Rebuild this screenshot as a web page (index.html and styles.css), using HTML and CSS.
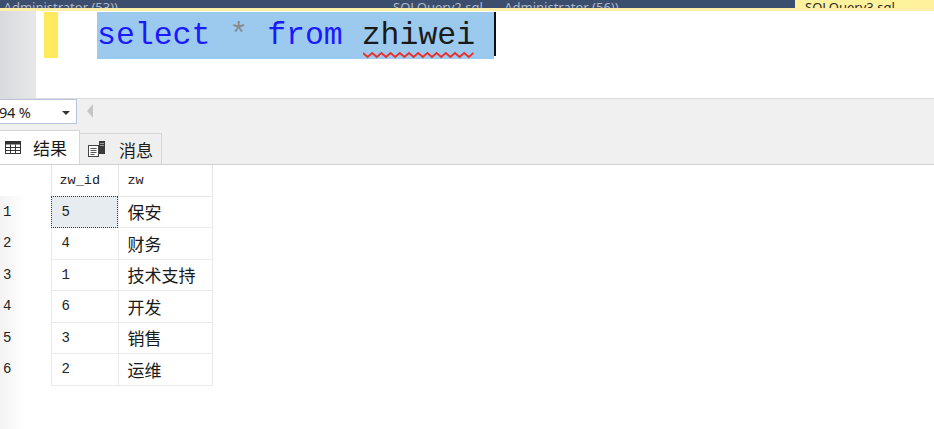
FILE: index.html
```html
<!DOCTYPE html>
<html>
<head>
<meta charset="utf-8">
<link rel="stylesheet" href="styles.css">
</head>
<body>
<div class="tabbar">
  <div class="doctab t1"><span>SQLQuery1.sql - ...Administrator (53))</span></div>
  <div class="doctab t2"><span>SQLQuery2.sql - ...Administrator (56))</span></div>
  <div class="doctab active"><span>SQLQuery3.sql</span></div>
</div>
<div class="tabline"></div>
<div class="editor">
  <div class="gutter"></div>
  <div class="changebar"></div>
  <div class="code">
    <span class="sel"><span class="kw">select</span> <span class="op">*</span> <span class="kw">from</span> <span class="err">zhiwei<svg class="squig" width="112" height="8" viewBox="0 0 112 8"><polyline points="0,2 4.6,6 9.2,2 13.8,6 18.4,2 23,6 27.6,2 32.2,6 36.8,2 41.4,6 46,2 50.6,6 55.2,2 59.8,6 64.4,2 69,6 73.6,2 78.2,6 82.8,2 87.4,6 92,2 96.6,6 101.2,2 105.8,6 110.4,2" fill="none" stroke="#e8302a" stroke-width="1.8"/></svg></span> </span><span class="caret"></span>
  </div>
</div>
<div class="toolbar">
  <div class="zoom"><span>94 %</span><span class="arrow"></span></div>
  <div class="scrollleft"></div>
</div>
<div class="restabs">
  <div class="rtab on">
    <svg width="16" height="13" viewBox="0 0 16 13"><rect x="0.5" y="0.5" width="15" height="12" fill="#fff" stroke="#333"/><rect x="0.5" y="0.5" width="15" height="3" fill="#333"/><path d="M5.5 3.5V12.5M10.5 3.5V12.5M0.5 6.5H15.5M0.5 9.5H15.5" stroke="#333" fill="none"/></svg>
    <span>结果</span>
  </div>
  <div class="rtab off">
    <svg width="18" height="16" viewBox="0 0 18 16"><rect x="0.5" y="4.5" width="10" height="11" fill="#fff" stroke="#444"/><path d="M2.5 7.5H8.5M2.5 9.5H8.5M2.5 11.5H8.5M2.5 13.5H6.5" stroke="#555"/><rect x="11" y="0" width="6" height="13" fill="#3a3a3a"/><rect x="12" y="2" width="4" height="1" fill="#9a9a9a"/><rect x="12" y="4" width="4" height="1" fill="#9a9a9a"/></svg>
    <span>消息</span>
  </div>
</div>
<div class="results">
  <table class="grid">
    <thead>
      <tr><th class="rn"></th><th class="c1">zw_id</th><th class="c2">zw</th></tr>
    </thead>
    <tbody>
      <tr><td class="rn">1</td><td class="c1 cur">5</td><td class="c2">保安</td></tr>
      <tr><td class="rn">2</td><td class="c1">4</td><td class="c2">财务</td></tr>
      <tr><td class="rn">3</td><td class="c1">1</td><td class="c2">技术支持</td></tr>
      <tr><td class="rn">4</td><td class="c1">6</td><td class="c2">开发</td></tr>
      <tr><td class="rn">5</td><td class="c1">3</td><td class="c2">销售</td></tr>
      <tr><td class="rn">6</td><td class="c1">2</td><td class="c2">运维</td></tr>
    </tbody>
  </table>
</div>
</body>
</html>
```
FILE: styles.css
```css
* { box-sizing: border-box; }
html, body { margin: 0; padding: 0; }
body {
  width: 934px;
  height: 429px;
  overflow: hidden;
  background: #fff;
  font-family: "Noto Sans", "Noto Sans CJK SC", sans-serif;
}
.tabbar {
  height: 8px;
  background: #3b4e6d;
  display: flex;
  overflow: hidden;
}
.doctab {
  height: 8px;
  display: flex;
  align-items: flex-end;
  overflow: hidden;
  font-size: 13px;
  line-height: 14px;
  white-space: nowrap;
}
.doctab span { position: relative; top: 6px; }
.t1 { width: 380px; color: #aeb8cb; justify-content: flex-end; padding-right: 262px; }
.t2 { width: 415px; color: #aeb8cb; padding-left: 13px; }
.active { flex: 1; background: #fff29d; color: #2a2a2a; padding-left: 10px; }
.tabline { height: 3px; background: #fdf0a6; }

.editor {
  height: 87px;
  display: flex;
  background: #fff;
}
.gutter {
  width: 36px;
  background: linear-gradient(to right, #d9dadd, #e8e8eb);
}
.changebar {
  width: 14px;
  height: 46px;
  margin-left: 8px;
  margin-top: 1px;
  background: #ffe95c;
}
.code {
  margin-left: 39px;
  margin-top: 1px;
  display: flex;
  align-items: flex-start;
  font-family: "Liberation Mono", monospace;
  font-size: 31.5px;
  line-height: 47px;
  white-space: pre;
}
.sel { background: #9ccaef; height: 47px; }
.kw { color: #1a1aff; }
.op { color: #8a8a8a; }
.err { color: #1a1a1a; position: relative; }
.squig { position: absolute; left: 1px; top: 33px; }
.caret { width: 2px; height: 44px; background: #111; }

.toolbar {
  height: 32px;
  background: #f0f0f0;
  border-top: 1px solid #dcdcdc;
  display: flex;
  align-items: flex-start;
}
.zoom {
  width: 77px;
  height: 25px;
  background: #fff;
  border: 1px solid #b7c5dc;
  border-left: none;
  display: flex;
  align-items: center;
  justify-content: space-between;
  padding-right: 6px;
  font-size: 14.5px;
  color: #1e1e1e;
}
.zoom span:first-child { margin-left: -1px; letter-spacing: -0.2px; }
.arrow {
  width: 0; height: 0;
  border-left: 4px solid transparent;
  border-right: 4px solid transparent;
  border-top: 4px solid #333;
  margin-top: 2px;
}
.scrollleft {
  width: 0; height: 0;
  margin-left: 10px;
  margin-top: 5px;
  border-top: 7px solid transparent;
  border-bottom: 7px solid transparent;
  border-right: 6px solid #c6c6c6;
}

.restabs {
  height: 35px;
  background: #f0f0f0;
  display: flex;
  align-items: flex-end;
  border-bottom: 1px solid #d0d0d0;
}
.rtab {
  display: flex;
  align-items: center;
  font-family: "Noto Sans CJK SC", sans-serif;
  font-size: 17px;
  color: #1a1a1a;
  border: 1px solid #d6d6d6;
  border-bottom: none;
}
.rtab.on {
  width: 80px;
  height: 34px;
  background: #fff;
  border-left: none;
  padding-left: 5px;
  gap: 12px;
}
.rtab.on span { margin-top: -1px; }
.rtab.off {
  width: 82px;
  height: 31px;
  background: #efefef;
  border-left: none;
  padding-left: 8px;
  gap: 13px;
}

.results {
  height: 264px;
  background: linear-gradient(to right, #f3f3f4, #ffffff 26px);
}
.grid {
  border-collapse: collapse;
  table-layout: fixed;
}
.grid th, .grid td {
  height: 31.5px;
  padding: 0;
  text-align: left;
  font-weight: normal;
  vertical-align: middle;
}
.grid th {
  height: 31px;
  font-family: "Liberation Mono", monospace;
  font-size: 13.5px;
  color: #222;
  background: #fff;
}
.grid th.c1, .grid th.c2 { border-right: 1px solid #e6e6e6; border-bottom: 1px solid #e6e6e6; }
.grid th.rn { border-right: 1px solid #e6e6e6; }
.rn { width: 51px; padding-left: 3px !important; font-family: "Liberation Mono", monospace; font-size: 14px; color: #222; }
.c1 { width: 67px; padding-left: 8px !important; }
.c2 { width: 94px; padding-left: 9px !important; }
.grid td.c1 {
  font-family: "Liberation Mono", monospace;
  font-size: 14px;
  color: #222;
  padding-left: 10px !important;
  border: 1px solid #ebebeb;
  background: #fff;
}
.grid td.c2 {
  font-family: "Noto Sans CJK SC", sans-serif;
  font-size: 17px;
  color: #1a1a1a;
  border: 1px solid #ebebeb;
  background: #fff;
}
.grid td.rn { border-right: 1px solid #ebebeb; }
.grid td.cur {
  background: #e7ecf1;
  outline: 1px dotted #3a3a3a;
  outline-offset: -1px;
}
```
